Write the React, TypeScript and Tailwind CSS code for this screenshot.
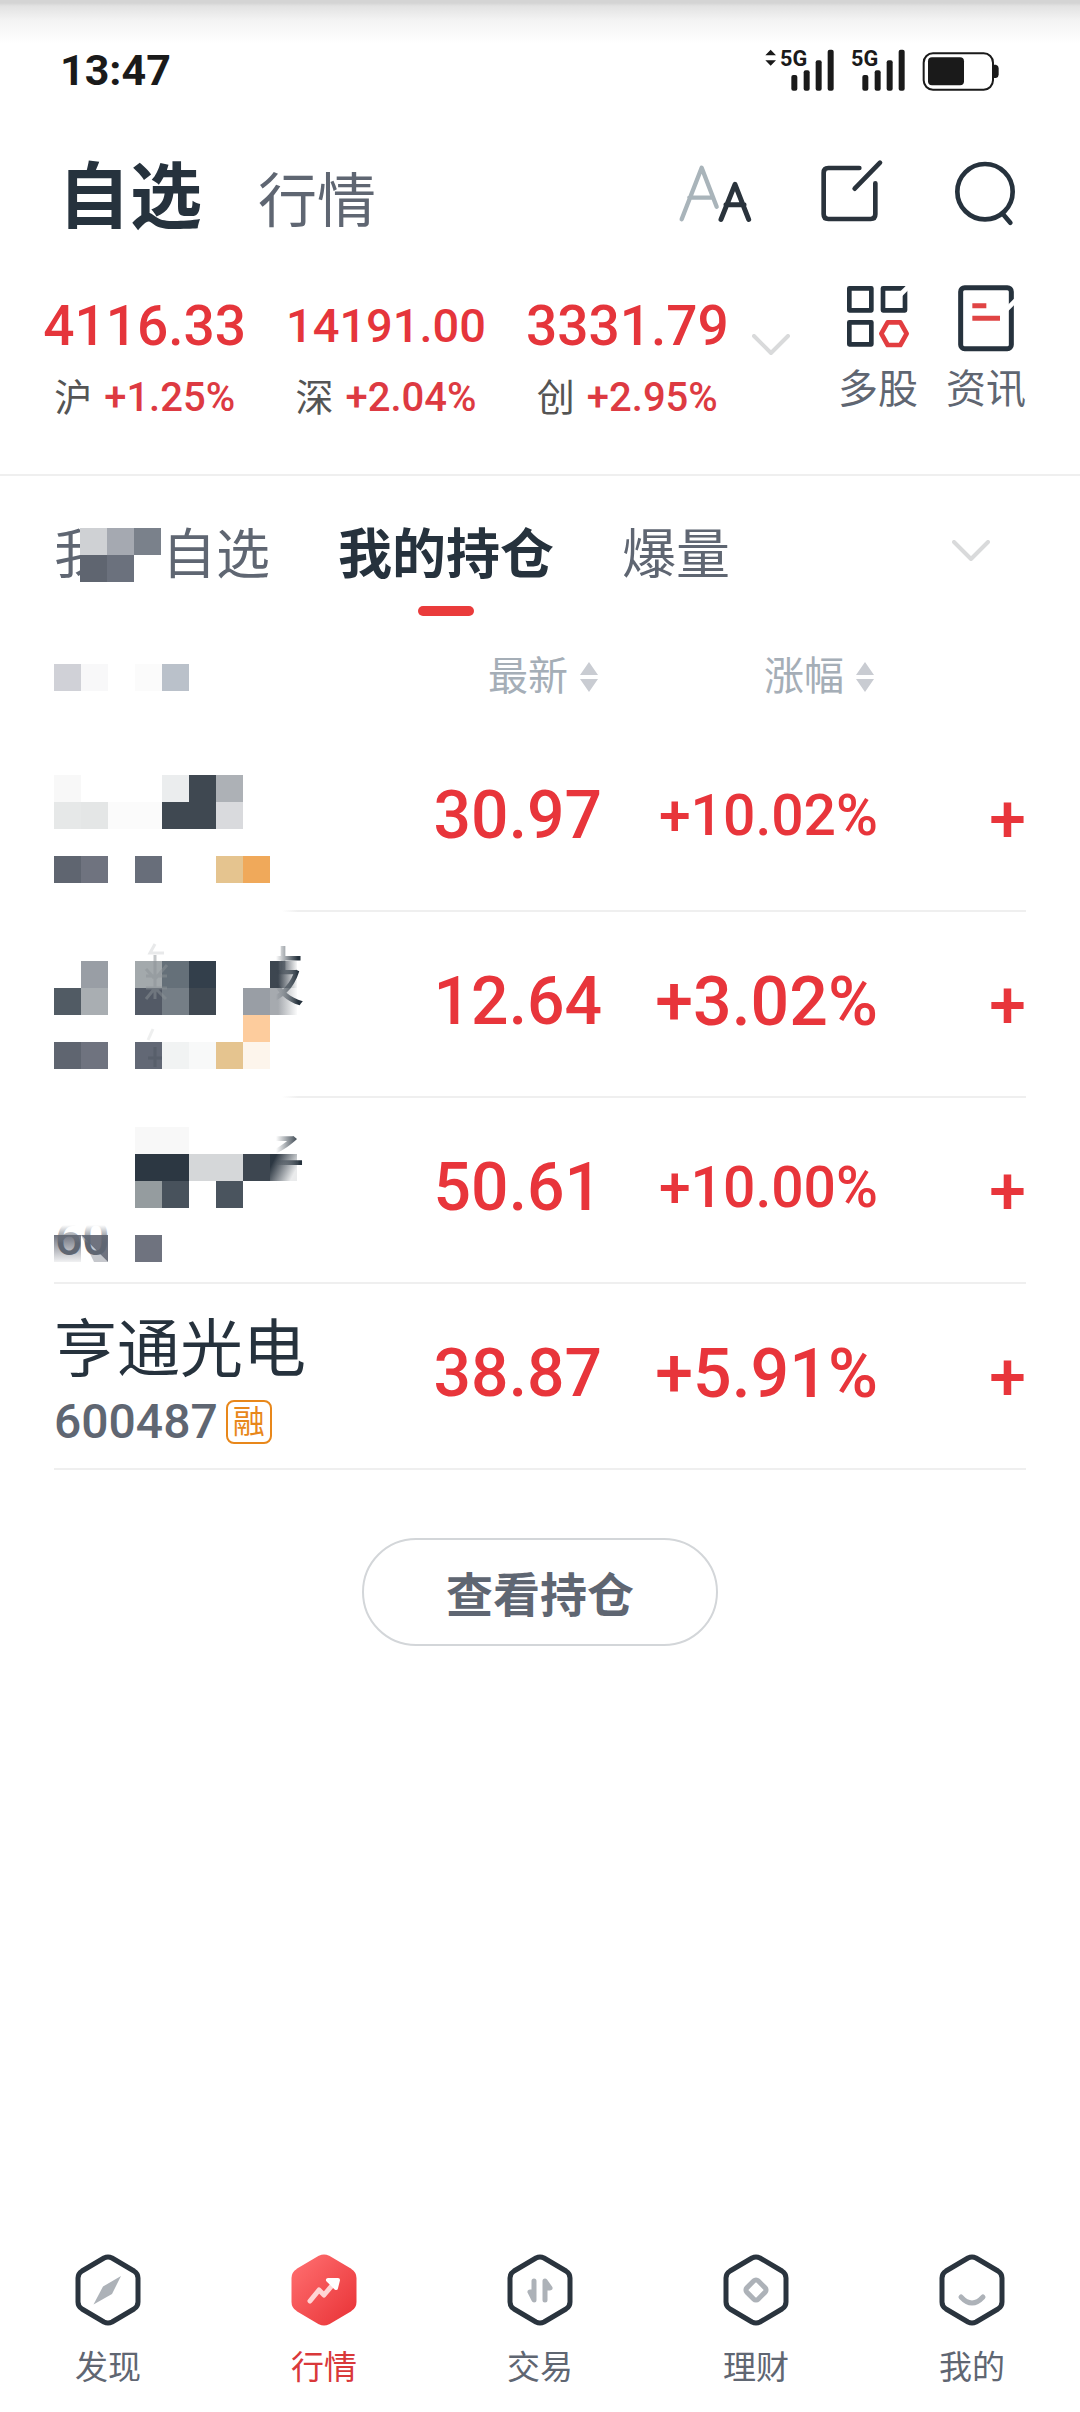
import React from 'react';

interface IndexQuote {
    label: string;
    value: string;
    change: string;
    compact?: boolean;
}

interface Cell {
    x: number;
    y: number;
    w?: number;
    color: string;
}

interface Holding {
    id: string;
    name?: string;
    code?: string;
    tag?: string;
    price: string;
    change: string;
    compact?: boolean;
    mosaic?: React.ReactNode;
    fadeRule?: boolean;
}

const CELL = 27;

const indices: IndexQuote[] = [
    { label: '沪', value: '4116.33', change: '+1.25%' },
    { label: '深', value: '14191.00', change: '+2.04%', compact: true },
    { label: '创', value: '3331.79', change: '+2.95%' },
];

const Cells: React.FC<{ cells: Cell[] }> = ({ cells }) => (
    <>
        {cells.map((c, i) => (
            <rect key={i} x={c.x * CELL} y={c.y * CELL} width={(c.w ?? 1) * CELL} height={CELL} fill={c.color} />
        ))}
    </>
);

const headerCells: Cell[] = [
    { x: 0, y: 0, color: '#d0d1d7' },
    { x: 1, y: 0, color: '#f8f8f9' },
    { x: 3, y: 0, color: '#fbfbfb' },
    { x: 4, y: 0, color: '#bac1ca' },
];

const firstCells: Cell[] = [
    { x: 0, y: 0, color: '#f8f8f8' },
    { x: 4, y: 0, color: '#ebedee' },
    { x: 5, y: 0, color: '#3f4851' },
    { x: 6, y: 0, color: '#adb1b6' },
    { x: 0, y: 1, color: '#e6e8e8' },
    { x: 1, y: 1, color: '#e4e6e6' },
    { x: 2, y: 1, w: 2, color: '#fbfbfb' },
    { x: 4, y: 1, w: 2, color: '#3f4851' },
    { x: 6, y: 1, color: '#d9dadd' },
    { x: 0, y: 3, color: '#5f6570' },
    { x: 1, y: 3, color: '#6f737f' },
    { x: 3, y: 3, color: '#686e7a' },
    { x: 6, y: 3, color: '#e5c48f' },
    { x: 7, y: 3, color: '#f0a95a' },
];

const secondCells: Cell[] = [
    { x: 1, y: 0, color: '#999ea5' },
    { x: 3, y: 0, color: '#a3a9ac' },
    { x: 4, y: 0, color: '#657079' },
    { x: 5, y: 0, color: '#333f4b' },
    { x: 0, y: 1, color: '#515b64' },
    { x: 1, y: 1, color: '#a9aeb2' },
    { x: 3, y: 1, color: '#535a66' },
    { x: 4, y: 1, color: '#757e86' },
    { x: 5, y: 1, color: '#3f4851' },
    { x: 7, y: 1, color: '#999ea5' },
    { x: 7, y: 2, color: '#fdcc9d' },
    { x: 0, y: 3, color: '#5f6570' },
    { x: 1, y: 3, color: '#6f737f' },
    { x: 3, y: 3, color: '#626875' },
    { x: 4, y: 3, color: '#f1f3f3' },
    { x: 5, y: 3, color: '#f8f9f9' },
    { x: 6, y: 3, color: '#e5c48f' },
    { x: 7, y: 3, color: '#fdf5ec' },
];

const thirdCells: Cell[] = [
    { x: 3, y: 0, w: 2, color: '#f8f8f8' },
    { x: 3, y: 1, w: 2, color: '#2c3742' },
    { x: 5, y: 1, w: 2, color: '#d5d7d9' },
    { x: 7, y: 1, color: '#3d4650' },
    { x: 3, y: 2, color: '#959c9f' },
    { x: 4, y: 2, color: '#48525c' },
    { x: 6, y: 2, color: '#4a545e' },
    { x: 3, y: 4, color: '#6f737f' },
];

const FirstMosaic = () => (
    <svg className="mt-5 block h-[108px] w-[248px]" viewBox="0 0 248 108" aria-hidden="true">
        <Cells cells={firstCells} />
    </svg>
);

const SecondMosaic = () => (
    <svg className="mt-2 block h-[120px] w-[248px]" viewBox="0 -12 248 120" overflow="visible" aria-hidden="true">
        <defs>
            <linearGradient id="m2-ink" gradientUnits="userSpaceOnUse" x1="222" y1="0" x2="244" y2="0">
                <stop offset="0" stopColor="#26323d" stopOpacity="0" />
                <stop offset="1" stopColor="#26323d" />
            </linearGradient>
            <linearGradient id="m2-dark" x1="0" x2="1">
                <stop offset="0.3" stopColor="#3d4650" />
                <stop offset="1" stopColor="#3d4650" stopOpacity="0.05" />
            </linearGradient>
            <linearGradient id="m2-grey" x1="0" x2="1">
                <stop offset="0.3" stopColor="#a6aaaf" />
                <stop offset="1" stopColor="#a6aaaf" stopOpacity="0.05" />
            </linearGradient>
        </defs>
        <Cells cells={secondCells} />
        <rect x="216" y="0" width="27" height="27" fill="url(#m2-dark)" />
        <rect x="216" y="27" width="27" height="27" fill="url(#m2-grey)" />
        <g stroke="#8c9296" strokeOpacity="0.5" strokeWidth="3" fill="none">
            <path d="M101 -6v44M92 8l8 9M113 4l-12 14M92 15h21M92 27h21M101 27l-9 11M101 27l11 11" />
            <path d="M101 -17l-5 9h14" strokeOpacity="0.2" />
            <path d="M99 68l-5 11" strokeOpacity="0.15" />
            <path d="M101 86v20M94 97h14" stroke="#4e5562" />
        </g>
        <text x="188" y="38" fontSize="63" fill="url(#m2-ink)">技</text>
    </svg>
);

const ThirdMosaic = () => (
    <svg className="mt-2 block h-[135px] w-[248px]" viewBox="0 0 248 135" overflow="visible" aria-hidden="true">
        <defs>
            <linearGradient id="m3-ink" gradientUnits="userSpaceOnUse" x1="222" y1="0" x2="246" y2="0">
                <stop offset="0" stopColor="#26323d" stopOpacity="0" />
                <stop offset="1" stopColor="#26323d" />
            </linearGradient>
            <linearGradient id="m3-dark" x1="0" x2="1" y1="0" y2="0.5">
                <stop offset="0.2" stopColor="#2c3742" />
                <stop offset="1" stopColor="#2c3742" stopOpacity="0.1" />
            </linearGradient>
            <linearGradient id="m3-code" x1="0" x2="0" y1="0" y2="1">
                <stop offset="0" stopColor="#6f737f" />
                <stop offset="1" stopColor="#6f737f" stopOpacity="0.1" />
            </linearGradient>
            <linearGradient id="m3-digits" gradientUnits="userSpaceOnUse" x1="0" y1="98" x2="0" y2="116">
                <stop offset="0" stopColor="#5f6672" stopOpacity="0" />
                <stop offset="1" stopColor="#5f6672" />
            </linearGradient>
        </defs>
        <Cells cells={thirdCells} />
        <rect x="216" y="27" width="27" height="27" fill="url(#m3-dark)" />
        <rect x="0" y="108" width="27" height="27" fill="url(#m3-code)" />
        <path d="M27 108h27v27z" fill="#6f737f" />
        <path d="M27 108l27 27H40z" fill="#6f737f" fillOpacity="0.4" />
        <text x="188" y="58" fontSize="63" fill="url(#m3-ink)">子</text>
        <text x="1" y="128" fontSize="48" fontWeight="500" fill="url(#m3-digits)">60</text>
    </svg>
);

const holdings: Holding[] = [
    { id: 'a', price: '30.97', change: '+10.02%', compact: true, mosaic: <FirstMosaic />, fadeRule: true },
    { id: 'b', price: '12.64', change: '+3.02%', mosaic: <SecondMosaic />, fadeRule: true },
    { id: 'c', price: '50.61', change: '+10.00%', compact: true, mosaic: <ThirdMosaic /> },
    { id: 'd', name: '亨通光电', code: '600487', tag: '融', price: '38.87', change: '+5.91%' },
];

const Signal: React.FC<{ active?: boolean }> = ({ active }) => (
    <svg className="h-[47px] w-[71px]" viewBox="68 50 213 141" fill="#1a1a1a" aria-hidden="true">
        {active && <path d="M72 75L88 58l16 17zM72 90h32l-16 16z" />}
        <text x="116" y="108" fontSize="65" fontWeight="700">5G</text>
        <rect x="150" y="134" width="18" height="47" rx="6" />
        <rect x="187" y="120" width="18" height="61" rx="6" />
        <rect x="223" y="90" width="18" height="91" rx="6" />
        <rect x="259" y="58" width="18" height="123" rx="6" />
    </svg>
);

const StatusBar = () => (
    <div className="flex h-[100px] items-center justify-between bg-[linear-gradient(to_bottom,#d4d4d4_0,#d4d4d4_3px,#e2e2e2_6px,#f3f3f3_20px,#ffffff_44px)] pt-10 pr-20 pl-[60px]">
        <span className="text-[43px] leading-[60px] font-bold text-[#1a1a1a]">13:47</span>
        <div className="flex items-center">
            <Signal active />
            <Signal />
            <svg className="ml-4 h-[47px] w-[78px]" viewBox="546 50 234 141" aria-hidden="true">
                <rect x="551" y="69" width="208" height="109" rx="28" fill="none" stroke="#1a1a1a" strokeWidth="6" />
                <rect x="564" y="81" width="108" height="84" rx="12" fill="#1a1a1a" />
                <path d="M762 103h6q8 2 8 10v20q0 8-8 10h-6z" fill="#1a1a1a" />
            </svg>
        </div>
    </div>
);

const Header = () => (
    <header className="mt-12 flex h-[92px] items-center justify-between pr-16 pl-[58px]">
        <div className="flex items-baseline gap-14 pt-3">
            <button className="text-[72px] leading-[88px] font-bold text-[#26323d]">自选</button>
            <button className="text-[59px] leading-[88px] text-[#5f6672]">行情</button>
        </div>
        <div className="flex items-center gap-[68px]">
            <button aria-label="字号">
                <svg className="h-[70px] w-[76px]" viewBox="48 60 228 210" fill="none" strokeLinecap="round" strokeLinejoin="round">
                    <path d="M65 241L125 86l45 117M88 176h70" stroke="#a9b4ba" strokeWidth="13" />
                    <path d="M183 241l42-105 41 105M198 197h54" stroke="#2a333c" strokeWidth="15" />
                </svg>
            </button>
            <button aria-label="编辑">
                <svg className="h-[70px] w-16" viewBox="480 60 192 210" fill="none" stroke="#2a333c" strokeWidth="14" strokeLinecap="round">
                    <path d="M598 87h-93q-14 0-14 14v125q0 14 14 14h127q14 0 14-14v-93M584 149l76-78" />
                </svg>
            </button>
            <button aria-label="搜索">
                <svg className="h-[70px] w-16" viewBox="876 60 192 210" fill="none" stroke="#26323d" strokeWidth="14" strokeLinecap="round">
                    <circle cx="975" cy="158" r="83" />
                    <path d="M1028 224l23 27" />
                </svg>
            </button>
        </div>
    </header>
);

const Chevron = () => (
    <svg className="h-[22px] w-[38px]" viewBox="0 0 38 22" fill="none" stroke="#d9dadb" strokeWidth="4" strokeLinecap="round" strokeLinejoin="round">
        <path d="M2 2l17 17L36 2" />
    </svg>
);

const IndexBar = () => (
    <section className="flex border-b-2 border-[#efefef] pt-11 pr-10 pb-[52px] pl-6">
        <div className="grid flex-1 grid-cols-3">
            {indices.map(q => (
                <button key={q.label} className="flex flex-col items-center gap-4 pt-[10px]">
                    <span className={`leading-[64px] font-medium text-[#e5353b] ${q.compact ? 'text-[47px]' : 'text-[55px]'}`}>{q.value}</span>
                    <span className="flex gap-3 leading-[48px]">
                        <span className="text-[38px] text-[#555555]">{q.label}</span>
                        <span className="text-[40px] font-medium text-[#dd3a42]">{q.change}</span>
                    </span>
                </button>
            ))}
        </div>
        <button className="flex w-[76px] pt-[50px] pl-1" aria-label="展开指数">
            <Chevron />
        </button>
        <button className="flex w-[108px] flex-col items-center gap-2 text-[40px] leading-[56px] text-[#5f6672]">
            <svg className="h-[70px] w-[72px]" viewBox="547 430 216 210" fill="none" strokeWidth="14" strokeLinejoin="round">
                <g stroke="#26323d">
                    <rect x="569" y="443" width="66" height="66" />
                    <rect x="670" y="443" width="66" height="66" />
                    <rect x="569" y="545" width="66" height="66" />
                </g>
                <path d="M665 579l19-34h38l19 34-19 34h-38z" stroke="#e23d40" />
                <path d="M718 466l32-32" stroke="#ffffff" />
            </svg>
            多股
        </button>
        <button className="flex w-[108px] flex-col items-center gap-2 text-[40px] leading-[56px] text-[#5f6672]">
            <svg className="h-[70px] w-[72px]" viewBox="868 430 216 210" fill="none">
                <rect x="900" y="441" width="152" height="183" rx="12" stroke="#26323d" strokeWidth="15" />
                <path d="M935 495h42M935 533h83" stroke="#e04444" strokeWidth="15" />
                <path d="M1038 506l36-36" stroke="#ffffff" strokeWidth="14" />
            </svg>
            资讯
        </button>
    </section>
);

const GroupTabs = () => (
    <nav className="flex h-[152px] items-start gap-[68px] pt-12 pr-[90px] pl-[54px] text-[54px] leading-[64px] text-[#5f6672]">
        <button className="relative">
            我的自选
            <svg className="absolute -top-1 left-[26px] h-[62px] w-[81px]" viewBox="0 -8 81 62" aria-hidden="true">
                <rect y="-8" width="81" height="62" fill="#ffffff" />
                <rect width="27" height="27" fill="#cfd1d4" />
                <rect x="27" width="27" height="27" fill="#a5a9b1" />
                <rect x="54" width="27" height="27" fill="#7a818b" />
                <rect y="27" width="27" height="27" fill="#5f6570" />
                <rect x="27" y="27" width="27" height="27" fill="#6b717d" />
            </svg>
        </button>
        <button className="flex flex-col items-center gap-[18px] font-bold text-[#26323d]" aria-current="true">
            我的持仓
            <span className="h-[10px] w-14 rounded-full bg-[#ea3b3b]" />
        </button>
        <button>爆量</button>
        <button className="mt-4 ml-auto" aria-label="更多分组">
            <Chevron />
        </button>
    </nav>
);

const SortButton: React.FC<{ label: string }> = ({ label }) => (
    <button className="inline-flex items-center gap-3 pr-1">
        {label}
        <svg className="h-[30px] w-[18px]" viewBox="0 0 18 30" fill="#c9ccd2" aria-hidden="true">
            <path d="M9 0l9 13H0zM0 17h18L9 30z" />
        </svg>
    </button>
);

const HoldingRow: React.FC<{ item: Holding }> = ({ item }) => (
    <tr className="h-[186px] text-right text-[66px] leading-[80px] font-medium text-[#e8353b]">
        <td
            className={
                item.fadeRule
                    ? 'bg-[linear-gradient(to_right,transparent_228px,#efefef_244px)] bg-[length:100%_2px] bg-bottom bg-no-repeat text-left font-normal'
                    : 'border-b-2 border-[#efefef] text-left font-normal'
            }
        >
            {item.mosaic ?? (
                <div className="flex flex-col gap-4 pt-3">
                    <span className="text-[63px] leading-[64px] text-[#26323d]">{item.name}</span>
                    <span className="flex items-center gap-2 text-[48px] leading-[48px] font-medium text-[#5f6672]">
                        {item.code}
                        <span className="rounded-lg border-2 border-[#e8871a] px-[5px] text-[32px] leading-[40px] font-normal text-[#e8871a]">{item.tag}</span>
                    </span>
                </div>
            )}
        </td>
        <td className="border-b-2 border-[#efefef] pb-1">{item.price}</td>
        <td className={`border-b-2 border-[#efefef] pb-1 ${item.compact ? 'text-[57px]' : 'text-[68px]'}`}>{item.change}</td>
        <td className="border-b-2 border-[#efefef] pt-1">+</td>
    </tr>
);

const HoldingsTable = () => (
    <div className="px-[54px]">
        <table className="w-full table-fixed border-separate border-spacing-0">
            <thead>
                <tr className="h-[98px] text-right text-[40px] leading-[48px] text-[#a5aeb7]">
                    <th className="text-left">
                        <svg className="h-[27px] w-[135px]" viewBox="0 0 135 27" aria-hidden="true">
                            <Cells cells={headerCells} />
                        </svg>
                    </th>
                    <th className="w-[272px] font-normal"><SortButton label="最新" /></th>
                    <th className="w-[276px] font-normal"><SortButton label="涨幅" /></th>
                    <th className="w-[148px]" />
                </tr>
            </thead>
            <tbody>
                {holdings.map(item => <HoldingRow key={item.id} item={item} />)}
            </tbody>
        </table>
    </div>
);

const navItems = [
    { label: '发现', glyph: <path d="M46 22L28 32.500 18.500 50.500 37 40z" fill="#adb2b8" /> },
    {
        label: '行情',
        active: true,
        glyph: (
            <>
                <path d="M19 47l9-11 5 5L44 28" stroke="#ffd5d5" strokeWidth="5" />
                <path d="M37 26h10l-2 8z" fill="#ffffff" stroke="#ffffff" strokeWidth="4" />
            </>
        ),
    },
    {
        label: '交易',
        glyph: (
            <g stroke="#adb2b8" strokeWidth="5" fill="#adb2b8">
                <path d="M27 27v19l-4-8h4" />
                <path d="M38 46V27l5 7h-5" />
            </g>
        ),
    },
    { label: '理财', glyph: <rect x="25" y="28" width="16" height="16" rx="3" transform="rotate(45 33 36)" stroke="#adb2b8" strokeWidth="5" /> },
    { label: '我的', glyph: <path d="M22 43q11 12 22 0" stroke="#adb2b8" strokeWidth="5" /> },
];

const BottomNav = () => (
    <nav className="mt-auto grid grid-cols-5 pb-6">
        {navItems.map(item => (
            <a
                key={item.label}
                href="#"
                className={`flex flex-col items-center gap-[22px] text-[33px] leading-[40px] ${item.active ? 'text-[#d9383a]' : 'text-[#5f6672]'}`}
            >
                <svg className="h-[72px] w-[66px]" viewBox="0 0 66 72" fill="none" strokeLinecap="round" strokeLinejoin="round" aria-hidden="true">
                    <defs>
                        <linearGradient id="nav-red" x1="0" y1="0" x2="1" y2="1">
                            <stop offset="0" stopColor="#ff6f70" />
                            <stop offset="1" stopColor="#e93337" />
                        </linearGradient>
                    </defs>
                    <path
                        d="M29 4q4-2 8 0l22 13q4 2.500 4 7v24q0 4.500-4 7L37 68q-4 2-8 0L7 55q-4-2.500-4-7V24q0-4.500 4-7z"
                        fill={item.active ? 'url(#nav-red)' : 'none'}
                        stroke={item.active ? 'url(#nav-red)' : '#2a343e'}
                        strokeWidth="5"
                    />
                    {item.glyph}
                </svg>
                {item.label}
            </a>
        ))}
    </nav>
);

export default function App() {
    return (
        <div className="flex min-h-screen flex-col bg-white font-[Roboto,'Noto_Sans_CJK_SC',sans-serif]">
            <StatusBar />
            <Header />
            <IndexBar />
            <GroupTabs />
            <main>
                <HoldingsTable />
                <div className="mt-[68px] flex justify-center">
                    <button className="h-[108px] w-[356px] rounded-full border-2 border-[#d3d6d9] pt-2 text-[47px] leading-[56px] font-bold text-[#5f6672]">查看持仓</button>
                </div>
            </main>
            <BottomNav />
        </div>
    );
}
